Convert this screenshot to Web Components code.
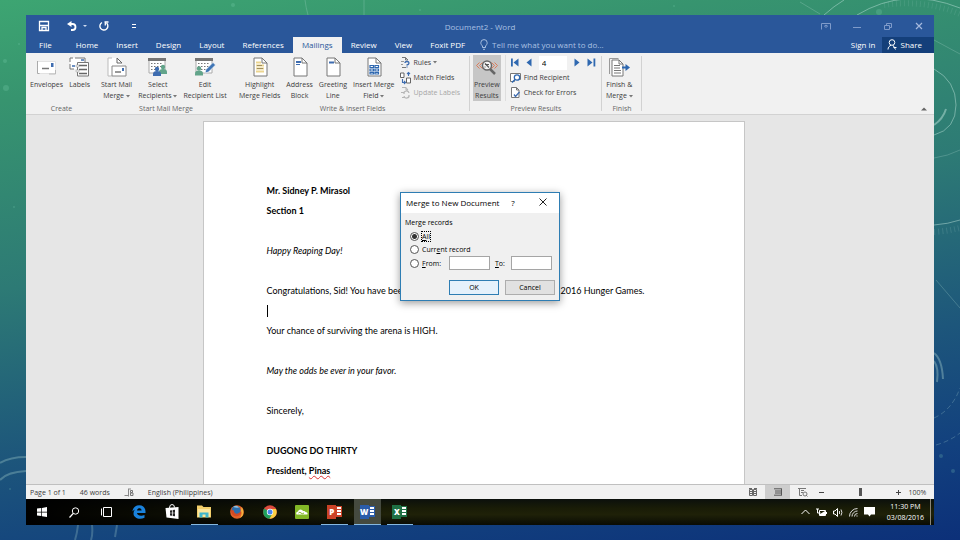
<!DOCTYPE html>
<html lang="en">
<head>
<meta charset="UTF-8">
<meta name="viewport" content="width=device-width, initial-scale=1.0">
<title>Document2 - Word</title>
<style>
  :root {
    --blue: #2a579a;
    --blue-dark: #143f7a;
    --grey: #f1f1f1;
    --line: #d2d2d2;
    --text: #3c3c3c;
    --ui: "Open Sans", "Noto Sans", sans-serif;
    --body: Lato, "Open Sans", sans-serif;
  }
  body {
    margin: 0;
    font: 7px/11px var(--ui);
    color: var(--text);
  }
  .typo { text-decoration: underline wavy #d33 1px; text-decoration-skip-ink: none; }
</style>
</head>
<body>

<slide-backdrop>
  <word-window>
    <title-bar slot="top">Document2 - Word</title-bar>
    <ribbon-tabs slot="top" tabs="Home,Insert,Design,Layout,References,Mailings,Review,View,Foxit PDF" active="Mailings"></ribbon-tabs>
    <word-ribbon slot="top">
      <ribbon-group label="Create" style="--w: 71px">
        <ribbon-button icon="envelope" label="Envelopes"></ribbon-button>
        <ribbon-button icon="labels" label="Labels"></ribbon-button>
      </ribbon-group>
      <ribbon-group label="Start Mail Merge" style="--w: 138px">
        <ribbon-button icon="startmerge" label="Start Mail|Merge" menu></ribbon-button>
        <ribbon-button icon="recipients" label="Select|Recipients" menu></ribbon-button>
        <ribbon-button icon="editlist" label="Edit|Recipient List"></ribbon-button>
      </ribbon-group>
      <ribbon-group label="Write &amp; Insert Fields" style="--w: 235px" divided>
        <ribbon-button icon="highlight" label="Highlight|Merge Fields"></ribbon-button>
        <ribbon-button icon="address" label="Address|Block"></ribbon-button>
        <ribbon-button icon="greeting" label="Greeting|Line"></ribbon-button>
        <ribbon-button icon="mergefield" label="Insert Merge|Field" menu></ribbon-button>
        <command-stack>
          <small-command icon="rules" label="Rules" menu></small-command>
          <small-command icon="match" label="Match Fields"></small-command>
          <small-command icon="update" label="Update Labels" disabled></small-command>
        </command-stack>
      </ribbon-group>
      <ribbon-group label="Preview Results" style="--w: 132px" divided>
        <ribbon-button icon="preview" label="Preview|Results" pressed></ribbon-button>
        <command-stack ruled>
          <record-navigator record="4"></record-navigator>
          <small-command icon="find" label="Find Recipient"></small-command>
          <small-command icon="check" label="Check for Errors"></small-command>
        </command-stack>
      </ribbon-group>
      <ribbon-group label="Finish" style="--w: 40px" divided>
        <ribbon-button icon="finish" label="Finish &amp;|Merge" menu></ribbon-button>
      </ribbon-group>
    </word-ribbon>

    <document-page>
      <p class="b">Mr. Sidney P. Mirasol</p>
      <p class="b">Section 1</p>
      <p></p>
      <p class="i">Happy Reaping Day!</p>
      <p></p>
      <p class="split"><span>Congratulations, Sid! You have been</span><span>2016 Hunger Games.</span></p>
      <p class="caret"></p>
      <p>Your chance of surviving the arena is HIGH.</p>
      <p></p>
      <p class="i">May the odds be ever in your favor.</p>
      <p></p>
      <p>Sincerely,</p>
      <p></p>
      <p class="b">DUGONG DO THIRTY</p>
      <p class="b">President, <span class="typo">Pinas</span></p>
    </document-page>
    <merge-dialog slot="dialog" heading="Merge to New Document"></merge-dialog>

    <status-bar slot="bottom"></status-bar>
    <task-bar slot="bottom"></task-bar>
  </word-window>
</slide-backdrop>

<script>
const doc = (w = 14, h = 18) => `<path d="M1 1h${w - 6}l5 5v${h - 6}H1z" fill="#fff" stroke="#777"/><path d="M${w - 5} 1v5h5" fill="none" stroke="#777"/>`;
const person = (x, y, c) => `<circle cx="${x}" cy="${y}" r="2.2" fill="${c}"/><path d="M${x - 4} ${y + 7}v-2q0-3 4-3t4 3v2z" fill="${c}"/>`;
const grid = `<path d="M1 3h16v13H1z" fill="#fff" stroke="#aaa"/><path d="M0 1h18v3H0z" fill="#757575"/><path d="M3 6.500h12M3 9.500h12M3 12.500h8" stroke="#777" stroke-dasharray="1.500 1.500"/>`;

// name: [width, height, markup]
const ICONS = {
  save: [10, 10, '<path d="M.500.500h9v9h-9zM1 4.500h8M3 9V6.500h4V9" fill="none" stroke="#fff" stroke-width="1.300"/>'],
  undo: [10, 10, '<path d="M4.500 0v6L0 3z" fill="#fff"/><path d="M3 3h2.500a3 3 0 0 1 0 6H4" fill="none" stroke="#fff" stroke-width="1.800"/>'],
  redo: [10, 10, '<path d="M3 1.500a4 4 0 1 0 4.500.500" fill="none" stroke="#fff" stroke-width="1.400"/><path d="M5.500 1h4M6.300.500v4" stroke="#fff" stroke-width="1.300"/>'],
  more: [6, 6, '<path d="M1 1.500h4M1 4.500h4" stroke="#fff"/>'],
  dot: [4, 4, '<path d="M0 1h4L2 3z" fill="#cfdcf0"/>'],
  ribbonopts: [10, 8, '<path d="M.500 7.500v-6h9v6M1 1.500h8" fill="none" stroke="#7f9bca"/><path d="M5 6V3M3 4.500 5 3l2 1.500" fill="none" stroke="#7f9bca"/>'],
  min: [8, 8, '<path d="M0 5.500h8" stroke="#7f9bca"/>'],
  restore: [8, 8, '<path d="M.500 3.500h5v4h-5zM2.500 3V1.500h5v4H6" fill="none" stroke="#7f9bca"/>'],
  close: [8, 8, '<path d="m1 1 6 6M7 1 1 7" stroke="#a5b9de" stroke-width="1.200"/>'],
  bulb: [8, 11, '<path d="M2.500 7C1.500 6 .800 5 .800 3.800a3.200 3.200 0 0 1 6.400 0C7.200 5 6.500 6 5.500 7v1.500h-3zM3 10.300h2" fill="none" stroke="#a9c0e2"/>'],
  share: [10, 11, '<circle cx="5" cy="3.500" r="2.800" fill="none" stroke="#fff"/><path d="M1 10.500C1 8 2.500 7 4 6.200M6 6.200 8.500 10.500M6.500 8.500h3" fill="none" stroke="#fff"/>'],
  envelope: [20, 20, '<path d="M.500 4.500h18v12H.500z" fill="#fff" stroke="#e2e2e2"/><path d="M.500 4v12.500h2" fill="none" stroke="#aaa"/><path d="M5 11.500h7" stroke="#777" stroke-width="1.500"/><path d="M14 6h2.500v4H14z" fill="#3f6db0"/><path d="M18.500 13v4H12" fill="none" stroke="#bbb"/>'],
  labels: [21, 20, '<path d="M1 5V1h15v5H8v6H1z" fill="#fff"/><path d="M1 5V1h3M6 1h10v5M1 7v5h4" fill="none" stroke="#777"/><path d="M3 9h3M12 3h3" stroke="#3f6db0" stroke-width="1.500"/><path d="M8.500 5.500h11v13.500h-11z" fill="#fff" stroke="#777"/><path d="M10 8.500h8M10 12.500h8M10 16.500h8" stroke="#666" stroke-width="1.500"/><path d="M7 8h3v2H7zM7 13h3v2H7z" fill="#f1f1f1" stroke="#999" stroke-width=".500"/>'],
  startmerge: [20, 20, '<path d="M1 1h9l5 5v13H1z" fill="#fff"/><path d="M5 1H1v18h4" fill="none" stroke="#bbb"/><path d="M10 1v5h5M10 1l5 5" stroke="#666" fill="none"/><path d="M5 9h14v10H5z" fill="#fff" stroke="#888"/><path d="M8 15h6" stroke="#777" stroke-width="1.500"/><path d="M15 11h2v3h-2z" fill="#3f6db0"/>'],
  recipients: [20, 20, grid + person(15, 10, '#62a48a') + person(9, 12, '#3f6db0')],
  editlist: [20, 20, grid + person(4, 11.500, '#62a48a') + '<path d="m10 16 1-3.500 7-7 2.500 2.500-7 7z" fill="#3f75b5" stroke="#fff" stroke-width=".600"/>'],
  highlight: [14, 20, doc(14, 19) + '<path d="M3 5.500h5M3 8.500h8M3 11.500h8M3 14.500h8" stroke="#ecd58f" stroke-width="2"/><path d="M4 8.500h5M4 11.500h6" stroke="#a08f60"/>'],
  address: [14, 20, doc(14, 19) + '<path d="M3 5h5" stroke="#3f6db0" stroke-width="2"/><path d="M3 7.500h4" stroke="#3f6db0"/>'],
  greeting: [14, 20, doc(14, 19) + '<path d="M3 5.500h5" stroke="#3f6db0" stroke-width="2"/>'],
  mergefield: [14, 20, doc(14, 19) + '<path d="M3 8.500h3.500v2H3zM8 8.500h3.500v2H8zM3 12h3.500v2H3zM8 12h3.500v2H8zM3 15.500h3.500v1.500H3zM8 15.500h3.500v1.500H8z" fill="#fff" stroke="#2f68b0" stroke-width="1.200"/>'],
  rules: [11, 11, '<path d="M2 .500h3.500L8 3M2 10.500h4M5.500.500V3H8" fill="#fff" stroke="#777"/><path d="M5 6q0-1.500 2-1.500t2 1.500-2 2v.500M7 9.500v1" fill="none" stroke="#3f6db0" stroke-width="1.300"/><path d="M1 4.500h3M1 7.500h2" stroke="#999"/>'],
  match: [12, 12, '<path d="M.500 1h3.500v4.500H.500zM6.500 6h4v5h-4z" fill="#fff" stroke="#666"/><path d="M8.500 4V.500M7 2l1.500-1.500L10 2M2.500 7v3.500H5M4 9l1.500 1.500L4 12" fill="none" stroke="#3f6db0" stroke-width="1.100"/>'],
  update: [11, 11, '<path d="M2 .500h4L8 3M2 10.500h3M6 .500V3h2" fill="none" stroke="#b5b5b5"/><path d="M4 7a2.500 2.500 0 0 1 5-1M9 8a2.500 2.500 0 0 1-5 1M1 5.500h3" fill="none" stroke="#b5b5b5" stroke-width="1.200"/>'],
  preview: [22, 20, '<path d="m3.500 5.500-3 3 3 3M6.500 5.500l-3 3 3 3M18.500 5.500l3 3-3 3M15.500 5.500l3 3-3 3" fill="none" stroke="#db7c5a"/><circle cx="11" cy="8.500" r="4.500" fill="#f4f4f4" stroke="#666" stroke-width="1.500"/><path d="m14 12 5 5" stroke="#666" stroke-width="2.500"/><path d="m9 6.500 4 4M9.500 10h-1M9 7.500h4" stroke="#555" stroke-width="1.200"/>'],
  first: [9, 9, '<path d="M1 .500h1.800v8H1zM8.500.500v8l-5-4z" fill="#2f68b0"/>'],
  prev: [6, 9, '<path d="M5.500.500v8l-5-4z" fill="#2f68b0"/>'],
  next: [6, 9, '<path d="M.500.500v8l5-4z" fill="#2f68b0"/>'],
  last: [9, 9, '<path d="M6.500.500h1.800v8H6.500zM.500.500v8l5-4z" fill="#2f68b0"/>'],
  find: [11, 11, '<path d="M.500 1.500h10v6h-6v2h-4z" fill="#fff" stroke="#777"/><circle cx="7" cy="5.500" r="2.700" fill="#fff" stroke="#2f68b0" stroke-width="1.300"/><path d="m5 7.500-3 3" stroke="#2f68b0" stroke-width="1.500"/>'],
  check: [11, 11, '<path d="M1.500.500h5L9 3v7.500H1.500zM6.500.500V3H9" fill="#fff" stroke="#777"/><path d="m4 7.500 1.500 2L9.500 5" fill="none" stroke="#3f6db0" stroke-width="1.300"/>'],
  finish: [22, 20, '<path d="M1.500 17V1.500h9" fill="none" stroke="#999"/><path d="M4 3h7l4 4v12H4z" fill="#fff" stroke="#777"/><path d="M11 3v4h4M6 8.500h6M6 11h6M6 13.500h7M6 16h7" fill="none" stroke="#777"/><path d="M14 10.500h4" stroke="#2f68b0" stroke-width="2"/><path d="m17.500 7 4.500 3.500-4.500 3.500z" fill="#2f68b0"/>'],
  collapse: [6, 4, '<path d="m0 3.500 3-3 3 3z" fill="#666"/>'],
  dialogclose: [8, 8, '<path d="m.500.500 7 7M7.500.500l-7 7" stroke="#222"/>'],
  proof: [10, 9, '<path d="M.500 7.500H4M4.500.500v8M5 1h2" stroke="#888" fill="none"/><path d="M6.500 2.500h2v2h-2zM6.500 5h2.500v2.500H6.500z" fill="none" stroke="#777"/>'],
  readmode: [8, 8, '<path d="M.500 1.500h3v6h-3zM4.500 1.500h3v6h-3zM0 .500h3M5 .500h3M1 3.500h2M5 3.500h2M1 5.500h2M5 5.500h2" fill="none" stroke="#666"/>'],
  print: [8, 8, '<path d="M0 .800h8M0 7.200h8M1 3h6M1 5h6M7.500 1v6" stroke="#555"/>'],
  web: [10, 9, '<path d="M0 .500h8M1.500 1v6.500H4M3 2.500h3M3 4.500h2" fill="none" stroke="#777"/><circle cx="7" cy="6" r="2" fill="none" stroke="#777"/><path d="m8 7 1.500 1.500" stroke="#777"/>'],
  minus: [5, 5, '<path d="M0 2.500h5" stroke="#444"/>'],
  plus: [5, 5, '<path d="M0 2.500h5M2.500 0v5" stroke="#444"/>'],
  start: [10, 10, '<path d="M0 1.500 4.300 1v3.700H0zM5 .900 10 0v4.700H5zM0 5.400h4.300V9L0 8.500zM5 5.400h5V10L5 9.200z" fill="#fff"/>'],
  search: [11, 11, '<circle cx="6.500" cy="4" r="3.200" fill="none" stroke="#fff"/><path d="M4.200 6.500.500 10.500" stroke="#fff" stroke-width="1.200"/>'],
  taskview: [11, 10, '<path d="M2.500.500h8v9h-8zM.500 1.500v7" fill="none" stroke="#fff"/>'],
  edge: [14, 14, '<path d="M13.500 8H5c.300 2.500 4 3.700 7.500 2v2.800C7.500 15.200 1.500 13 1.500 8.500c0-2.500 1.500-4.300 3-5C3.500 4.500.800 5.500.300 6.500.800 3 3.500.300 7.200.300c4.300 0 6.700 3.200 6.300 7.700zM5 5.500h4.600C9.500 2.800 5.500 2.500 5 5.500z" fill="#1a82dc"/>'],
  store: [14, 15, '<path d="M.500 4 13.500 3v12L1.500 13.500z" fill="#fff"/><path d="M4.500 4q0-3.500 2.500-3.500T9.500 3.500" fill="none" stroke="#fff"/><path d="m5 6.500 2-.300v2.500H5zM7.700 6.100l2.300-.300v2.900H7.700zM5 9.300h2v2.500l-2-.300zM7.700 9.300H10v3l-2.300-.400z" fill="#222"/>'],
  explorer: [14, 13, '<path d="M0 .500h5l1.500 1.500H14v10.500H0z" fill="#f3cf6b"/><path d="M1 4h12v8H1z" fill="#fbe59c"/><path d="M2.500 12.500v-5h9v5h-3v-3h-3v3z" fill="#3fb5cc"/>'],
  firefox: [14, 14, '<circle cx="7" cy="7" r="6.800" fill="#e2632a"/><circle cx="6" cy="5.500" r="4.500" fill="#2c6fae"/><path d="M1 3.500C.500 9 3.500 12 7.500 11c2.500-.500 3.500-2 3.500-4l-2 .700C7 10 3.500 8 4 5.500L1.500 5z" fill="#d44a24"/><path d="M11.500 2c3 3.500 2.500 9-1.500 11 1-2 2.500-5 1-7z" fill="#f3b23c"/><path d="M3.500 1.500q3.500-2 5.500 1-3 .500-5-.200z" fill="#8fc1e2"/>'],
  chrome: [14, 14, '<circle cx="7" cy="7" r="6.800" fill="#dd4b3e"/><path d="M1.100 3.600A6.800 6.800 0 0 0 6.500 13.800L10 8.500 7 7z" fill="#1fa05c"/><path d="M13 4A6.800 6.800 0 0 1 6.500 13.800L10 7.500 9 4z" fill="#fbcf43"/><circle cx="7" cy="7" r="3.200" fill="#fff"/><circle cx="7" cy="7" r="2.500" fill="#4a85ec"/>'],
  cloud: [14, 14, '<rect width="14" height="14" rx="1" fill="#83b827"/><path d="M1.500 9.500Q.500 7 3 6.500q.500-2 2.500-2 2 0 2.500 1.500 2-.500 2.500 1 2.500 0 2 2.500z" fill="#fff"/><path d="M3.500 8q1.500-1.500 2.500 0t3 0" fill="none" stroke="#83b827"/>'],
  tray: [9, 6, '<path d="m.500 5 4-4 4 4" fill="none" stroke="#fff"/>'],
  battery: [11, 9, '<path d="M3.500 2.500h6v5h-6zM10.500 4v2" fill="none" stroke="#fff"/><path d="M0 1h3M1.500 1v4l3 0" stroke="#fff" fill="none"/><path d="M4 6l5-3v4H4z" fill="#fff"/>'],
  speaker: [10, 9, '<path d="M.500 3H2L4.500.500v8L2 6H.500z" fill="none" stroke="#fff"/><path d="M6.500 3v3M8 1.500q1.800 3 0 6" fill="none" stroke="#ddd"/>'],
  network: [9, 9, '<path d="M.500 8.500A8 8 0 0 1 8.500.500M3 8.500A5.500 5.500 0 0 1 8.500 3M5.500 8.500a3 3 0 0 1 3-3" fill="none" stroke="#ddd"/><path d="M7.500 7.500h1v1h-1z" fill="#fff"/>'],
  action: [11, 10, '<path d="M0 0h11v7.500H7L5.500 9.500 4 7.500H0z" fill="#fff"/>']
};

class UiIcon extends HTMLElement {
  connectedCallback() {
    const [w, h, markup] = ICONS[this.getAttribute('name')];
    this.attachShadow({ mode: 'open' }).innerHTML = `
      <style>
        :host { display: inline-flex; flex: none; }
        svg { display: block; overflow: visible; }
      </style>
      <svg width="${w}" height="${h}" viewBox="0 0 ${w} ${h}" aria-hidden="true">${markup}</svg>
    `;
  }
}

// Shared reset for the real controls inside each shadow root
const RESET = `
  button, input { font: inherit; color: inherit; margin: 0; padding: 0; border: 0; background: none; border-radius: 0; box-sizing: border-box; outline: 0; }
  button { display: flex; align-items: center; justify-content: center; white-space: nowrap; }
`;

const CARET = '<svg width="4" height="3" viewBox="0 0 4 3" aria-hidden="true"><path d="M0 0h4L2 2.500z" fill="#777"/></svg>';

function define(tag, template) {
  customElements.define(tag, class extends HTMLElement {
    connectedCallback() {
      this.attachShadow({ mode: 'open' }).innerHTML = `<style>${RESET}</style>` + template(this);
    }
  });
}

define('slide-backdrop', () => `
  <style>
    :host {
      display: flex;
      position: relative;
      box-sizing: border-box;
      min-height: 100vh;
      padding: 15px 26px;
      background: linear-gradient(172deg, #3da572 0%, #37946f 15%, #2d7a75 43%, #1d567b 68%, #12407e 86%, #0c3079 100%);
      overflow: hidden;
    }
    .art { position: absolute; inset: 0; width: 100%; height: 100%; }
    ::slotted(*) { position: relative; flex: 1; min-width: 0; }
  </style>
  <svg class="art" viewBox="0 0 960 540" preserveAspectRatio="none" fill="none" stroke="#b9e0d8" aria-hidden="true">
    <g stroke-opacity=".5">
      <path d="M824 15q10-9 20-15M857 15Q905-14 960 8"/>
      <path d="M934 69q22 12 22 36t-22 30"/>
      <path d="M934 125q9-6 12-16" stroke-width="2"/>
      <path d="M934 225q14-1 26-5"/>
      <path d="M934 353q8 6 9 26M934 361q5 7 3 21" stroke-width="2" stroke-opacity=".35"/>
    </g>
    <g stroke-opacity=".25">
      <path d="M934 158q14-2 26-8M934 40l26 14M936 280l24 28"/>
      <path d="M934 418q18-8 26-30M936 445q14-4 24-12" stroke-dasharray="5 3"/>
      <path d="M884 5q40-6 76 9" stroke-width="6" stroke-dasharray="1 3" stroke-opacity=".12"/>
      <path d="M934 232q14-1 26-4" stroke-width="6" stroke-dasharray="1 3" stroke-opacity=".15"/>
      <path d="M800 2l20 12M305 0q1 8 3 15M364 0v15"/>
    </g>
    <path d="M0 463q10-6 26-6M0 480q7-8 26-9" stroke-opacity=".3" stroke-width="2"/>
    <path d="M78 525q-1 9-3 15M92 525q1 9-1 15M117 525l-2 12" stroke-opacity=".25" stroke-width="2"/>
    <g fill="#8fe0c4" fill-opacity=".2" stroke="none">
      <circle cx="6" cy="88" r="3"/><circle cx="5" cy="61" r="2"/><circle cx="19" cy="44" r="1"/><circle cx="233" cy="5" r="2"/>
      <circle cx="674" cy="6" r="1"/><circle cx="420" cy="10" r="1"/><circle cx="879" cy="12" r="3"/><circle cx="14" cy="207" r="1"/>
      <circle cx="953" cy="471" r="2"/><circle cx="941" cy="456" r="2"/><circle cx="10" cy="489" r="1"/>
    </g>
  </svg>
  <slot></slot>
`);

define('word-window', () => `
  <style>
    :host { display: flex; flex-direction: column; }
    .workspace {
      position: relative;
      flex: 1;
      display: flex;
      justify-content: center;
      padding: 6px 13px 0 0;
      background: #e6e6e6;
    }
    /* The dialog floats over the page */
    slot[name="dialog"]::slotted(*) { position: absolute; top: 77px; left: calc(50% - 80px); }
  </style>
  <slot name="top"></slot>
  <div class="workspace"><slot></slot><slot name="dialog"></slot></div>
  <slot name="bottom"></slot>
`);

define('title-bar', () => `
  <style>
    :host {
      display: grid;
      grid-template-columns: 1fr auto 1fr;
      align-items: center;
      height: 22px;
      background: var(--blue);
      color: #a9c0e2;
      font-size: 8px;
    }
    .quick, .controls { display: flex; align-items: center; }
    .quick { padding-left: 13px; gap: 18px; }
    .quick div { display: flex; align-items: center; gap: 6px; }
    .quick .last { margin-left: 4px; }
    .quick div + button { margin-left: -6px; }
    .controls { justify-content: flex-end; }
    .controls button { width: 31px; height: 20px; }
  </style>
  <div class="quick">
    <button aria-label="Save"><ui-icon name="save"></ui-icon></button>
    <div>
      <button aria-label="Undo"><ui-icon name="undo"></ui-icon></button>
      <button aria-label="Undo history"><ui-icon name="dot"></ui-icon></button>
    </div>
    <button aria-label="Redo"><ui-icon name="redo"></ui-icon></button>
    <button class="last" aria-label="Customize toolbar"><ui-icon name="more"></ui-icon></button>
  </div>
  <slot></slot>
  <div class="controls">
    <button aria-label="Ribbon options"><ui-icon name="ribbonopts"></ui-icon></button>
    <button aria-label="Minimize"><ui-icon name="min"></ui-icon></button>
    <button aria-label="Restore"><ui-icon name="restore"></ui-icon></button>
    <button aria-label="Close"><ui-icon name="close"></ui-icon></button>
  </div>
`);

define('ribbon-tabs', el => `
  <style>
    :host { display: flex; height: 16px; background: var(--blue); color: #fff; font-size: 8px; }
    nav { display: flex; }
    button { padding: 0 9px 2px; }
    .file { padding: 0 15px 2px 13px; }
    .on { background: var(--grey); color: var(--blue); }
    label { display: flex; align-items: center; gap: 4px; padding: 0 0 2px 6px; }
    input { width: 120px; }
    input::placeholder { color: #a9c0e2; opacity: 1; }
    .account { display: flex; margin-left: auto; }
    .account .signin { padding: 0 6px 2px; }
    .account .share { gap: 4px; padding: 0 12px 2px 5px; background: var(--blue-dark); }
  </style>
  <nav>
    <button class="file">File</button>
    ${el.getAttribute('tabs').split(',').map(t => `<button class="${t === el.getAttribute('active') ? 'on' : ''}">${t}</button>`).join('')}
  </nav>
  <label><ui-icon name="bulb"></ui-icon><input type="text" aria-label="Tell me" placeholder="Tell me what you want to do..."></label>
  <div class="account">
    <button class="signin">Sign in</button>
    <button class="share"><ui-icon name="share"></ui-icon>Share</button>
  </div>
`);

define('word-ribbon', () => `
  <style>
    :host { display: flex; background: var(--grey); border-bottom: 1px solid var(--line); }
    .collapse { margin: auto 7px 3px auto; }
  </style>
  <slot></slot>
  <button class="collapse" aria-label="Collapse the ribbon"><ui-icon name="collapse"></ui-icon></button>
`);

define('ribbon-group', el => `
  <style>
    :host {
      display: flex;
      flex-direction: column;
      gap: 2px;
      box-sizing: border-box;
      width: var(--w);
      padding: 2px 3px 0;
      background: linear-gradient(var(--line), var(--line)) right 3px / 1px 55px no-repeat;
    }
    :host(:not([divided])) { background: none; }
    .items { display: flex; gap: 4px; height: 46px; }
    .label { text-align: center; color: #666; white-space: nowrap; }
  </style>
  <div class="items"><slot></slot></div>
  <div class="label">${el.getAttribute('label').replace('&', '&amp;')}</div>
`);

define('ribbon-button', el => {
  const lines = el.getAttribute('label').replace('&', '&amp;').split('|');
  const menu = el.hasAttribute('menu') ? ' ' + CARET : '';
  return `
    <style>
      :host { display: block; }
      :host([pressed]) { background: #c6c6c6; }
      button { flex-direction: column; justify-content: flex-start; height: 46px; padding: 0 1px; }
      .icon { display: flex; align-items: center; height: 24px; }
      svg { vertical-align: middle; }
    </style>
    <button aria-pressed="${el.hasAttribute('pressed')}">
      <span class="icon"><ui-icon name="${el.getAttribute('icon')}"></ui-icon></span>
      ${lines.map((l, i) => `<span>${l}${i === lines.length - 1 ? menu : ''}</span>`).join('')}
    </button>
  `;
});

define('command-stack', () => `
  <style>
    :host { display: flex; flex-direction: column; }
    :host([ruled]) { flex: 1; padding-left: 4px; border-left: 1px solid #dedede; }
  </style>
  <slot></slot>
`);

define('small-command', el => `
  <style>
    :host { display: block; }
    :host([disabled]) { color: #a6a6a6; }
    button { height: 15px; gap: 2px; }
    ui-icon { width: 12px; }
  </style>
  <button ${el.hasAttribute('disabled') ? 'disabled' : ''}>
    <ui-icon name="${el.getAttribute('icon')}"></ui-icon><span>${el.getAttribute('label')}</span>${el.hasAttribute('menu') ? CARET : ''}
  </button>
`);

define('record-navigator', el => `
  <style>
    :host { display: flex; align-items: center; gap: 7px; height: 15px; }
    input { width: 28px; height: 14px; padding-left: 3px; background: #fff; font-size: 8px; color: #000; }
  </style>
  <button aria-label="First record"><ui-icon name="first"></ui-icon></button>
  <button aria-label="Previous record"><ui-icon name="prev"></ui-icon></button>
  <input type="text" aria-label="Record" value="${el.getAttribute('record')}">
  <button aria-label="Next record"><ui-icon name="next"></ui-icon></button>
  <button aria-label="Last record"><ui-icon name="last"></ui-icon></button>
`);

define('document-page', () => `
  <style>
    :host {
      display: block;
      box-sizing: border-box;
      width: 100%;
      max-width: 542px;
      padding: 59px 63px 0;
      background: #fff;
      border: 1px solid #c6c6c6;
      border-bottom: 0;
      font: 9px/20px var(--body);
      color: #000;
    }
    ::slotted(p) { height: 20px; margin: 0; white-space: nowrap; }
    ::slotted(.b) { font-weight: bold; }
    ::slotted(.i) { font-style: italic; }
    ::slotted(.split) { display: flex; justify-content: space-between; margin-right: 36px; }
    ::slotted(.caret) { background: linear-gradient(#000, #000) left center / 1px 12px no-repeat; }
  </style>
  <slot></slot>
`);

define('merge-dialog', el => `
  <style>
    :host {
      display: block;
      box-sizing: border-box;
      width: 160px;
      background: #f0f0f0;
      border: 1px solid #2e7db3;
      box-shadow: 0 2px 8px rgba(0, 0, 0, .4);
      font-size: 7px;
      color: #000;
    }
    header { display: flex; align-items: center; height: 20px; box-sizing: border-box; padding: 0 11px 2px 5px; background: #fff; font-size: 8px; }
    header button { width: 10px; }
    header .help { margin: 0 20px 0 auto; }
    form { display: flex; flex-direction: column; padding: 4px 4px 5px; }
    .title { margin-bottom: 2px; }
    .row { display: flex; align-items: center; height: 13px; padding-left: 5px; }
    .row label { margin-left: 3px; }
    .range { height: 14px; }
    input[type="radio"] {
      appearance: none;
      width: 9px;
      height: 9px;
      border: 1px solid #555;
      border-radius: 50%;
      background: #fff;
    }
    input[type="radio"]:checked { background: radial-gradient(#333 2px, #fff 3px); }
    input[type="radio"]:checked + label { outline: 1px dotted #000; line-height: 9px; }
    input[type="text"] { width: 41px; height: 14px; background: #fff; border: 1px solid #a5a5a5; }
    .range label:first-of-type { width: 27px; }
    .range .to { margin: 0 6px 0 5px; }
    footer { display: flex; justify-content: flex-end; gap: 6px; margin-top: 10px; }
    footer button { width: 50px; height: 15px; background: #e1e1e1; border: 1px solid #adadad; }
    footer .ok { background: #e5f1fb; border-color: #2e7db3; }
  </style>
  <header>
    <span>${el.getAttribute('heading')}</span>
    <button class="help" aria-label="Help">?</button>
    <button aria-label="Close"><ui-icon name="dialogclose"></ui-icon></button>
  </header>
  <form onsubmit="return false">
    <span class="title">Merge records</span>
    <div class="row"><input type="radio" name="records" id="all" checked><label for="all"><u>A</u>ll</label></div>
    <div class="row"><input type="radio" name="records" id="current"><label for="current">Curr<u>e</u>nt record</label></div>
    <div class="row range">
      <input type="radio" name="records" id="from"><label for="from"><u>F</u>rom:</label>
      <input type="text" aria-label="From">
      <label class="to" for="to"><u>T</u>o:</label>
      <input type="text" id="to">
    </div>
    <footer>
      <button class="ok">OK</button>
      <button type="button">Cancel</button>
    </footer>
  </form>
`);

define('status-bar', () => `
  <style>
    :host {
      display: flex;
      align-items: center;
      justify-content: space-between;
      height: 15px;
      box-sizing: border-box;
      padding: 0 4px;
      background: var(--grey);
      border-top: 1px solid #c0c0c0;
    }
    div { display: flex; align-items: center; gap: 14px; }
    .view { gap: 0; }
    .view button { width: 25px; height: 14px; }
    .view .on { background: #cdcdcd; }
    .view .zoom { width: 13px; }
    input[type="range"] { appearance: none; width: 64px; height: 9px; }
    input[type="range"]::-webkit-slider-thumb { appearance: none; width: 3px; height: 8px; background: #555; }
  </style>
  <div>
    <span>Page 1 of 1</span><span>46 words</span><ui-icon name="proof"></ui-icon><span>English (Philippines)</span>
  </div>
  <div class="view">
    <button aria-label="Read mode"><ui-icon name="readmode"></ui-icon></button>
    <button class="on" aria-label="Print layout"><ui-icon name="print"></ui-icon></button>
    <button aria-label="Web layout"><ui-icon name="web"></ui-icon></button>
    <button class="zoom" aria-label="Zoom out"><ui-icon name="minus"></ui-icon></button>
    <input type="range" aria-label="Zoom" min="10" max="190" value="100">
    <button class="zoom" aria-label="Zoom in"><ui-icon name="plus"></ui-icon></button>
    <button>100%</button>
  </div>
`);

// Office app tile: coloured cover with a letter and a white sheet behind
define('office-tile', el => `
  <style>
    :host { display: flex; align-items: center; font: bold 8px/14px var(--ui); color: #fff; }
    b { width: 9px; text-align: center; background: var(--c); }
    i { box-sizing: border-box; width: 6px; height: 11px; border: 1px solid var(--c); background: repeating-linear-gradient(#fff 0 2px, var(--c) 2px 3px); }
  </style>
  <b>${el.getAttribute('letter')}</b><i></i>
`);

define('task-bar', () => `
  <style>
    :host {
      display: flex;
      height: 26px;
      color: #fff;
      background: linear-gradient(90deg, #000 0%, rgba(0, 0, 0, 0) 40%), linear-gradient(#0b100c 0%, #191c07 35%, #1f2108 60%, #090b04 100%);
    }
    nav { display: flex; }
    nav button { flex: 1; }
    .system { width: 97px; }
    .apps { width: 293px; }
    .apps button { border-bottom: 1px solid transparent; margin: 0 3px; }
    .apps .open { border-color: #86b8e0; }
    .apps .active { background: #454a3f; }
    .tray { display: flex; align-items: center; gap: 6px; margin-left: auto; }
    .clock { padding-left: 6px; text-align: center; }
    .peek { width: 3px; height: 26px; border-left: 1px solid #8a8577; }
  </style>
  <nav class="system">
    <button aria-label="Start"><ui-icon name="start"></ui-icon></button>
    <button aria-label="Search"><ui-icon name="search"></ui-icon></button>
    <button aria-label="Task view"><ui-icon name="taskview"></ui-icon></button>
  </nav>
  <nav class="apps">
    <button aria-label="Edge"><ui-icon name="edge"></ui-icon></button>
    <button aria-label="Store"><ui-icon name="store"></ui-icon></button>
    <button class="open" aria-label="File Explorer"><ui-icon name="explorer"></ui-icon></button>
    <button aria-label="Firefox"><ui-icon name="firefox"></ui-icon></button>
    <button aria-label="Chrome"><ui-icon name="chrome"></ui-icon></button>
    <button aria-label="Cloud"><ui-icon name="cloud"></ui-icon></button>
    <button class="open"><office-tile letter="P" style="--c: #cb4327"></office-tile></button>
    <button class="open active"><office-tile letter="W" style="--c: #2a5caa"></office-tile></button>
    <button class="open"><office-tile letter="X" style="--c: #1f7145"></office-tile></button>
  </nav>
  <div class="tray">
    <ui-icon name="tray"></ui-icon>
    <ui-icon name="battery"></ui-icon>
    <ui-icon name="speaker"></ui-icon>
    <ui-icon name="network"></ui-icon>
    <ui-icon name="action"></ui-icon>
    <button class="clock">11:30 PM<br>03/08/2016</button>
    <span class="peek"></span>
  </div>
`);

customElements.define('ui-icon', UiIcon);
</script>
</body>
</html>
